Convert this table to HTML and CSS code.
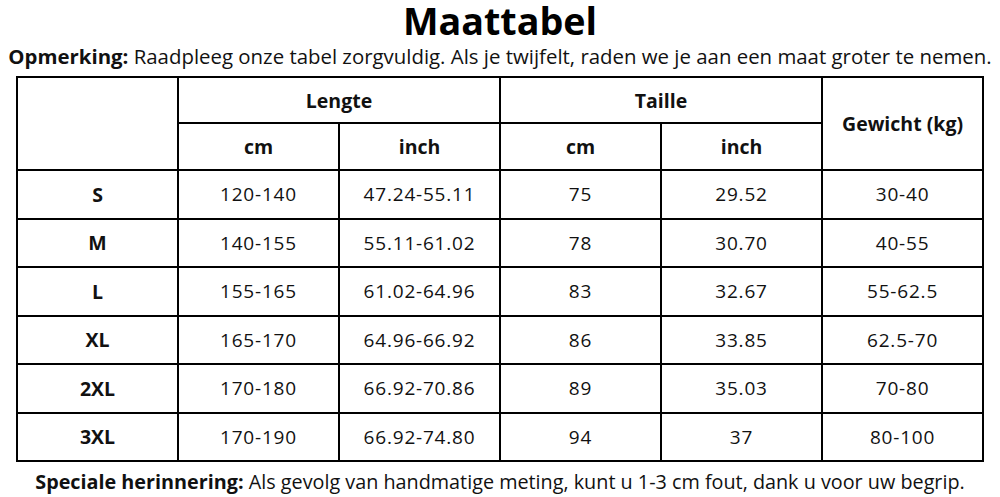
FILE: index.html
```html
<!DOCTYPE html>
<html lang="nl">
<head>
<meta charset="utf-8">
<title>Maattabel</title>
<link rel="stylesheet" href="styles.css">
</head>
<body>
<div class="page">
  <h1 class="title">Maattabel</h1>
  <p class="note"><b>Opmerking:</b> Raadpleeg onze tabel zorgvuldig. Als je twijfelt, raden we je aan een maat groter te nemen.</p>
  <table class="sizes">
    <colgroup>
      <col class="c"><col class="c"><col class="c"><col class="c"><col class="c"><col class="c">
    </colgroup>
    <thead>
      <tr class="h1">
        <th rowspan="2" class="blank"></th>
        <th colspan="2">Lengte</th>
        <th colspan="2">Taille</th>
        <th rowspan="2" class="gew">Gewicht (kg)</th>
      </tr>
      <tr class="h2">
        <th>cm</th><th>inch</th><th>cm</th><th>inch</th>
      </tr>
    </thead>
    <tbody>
      <tr><th>S</th><td>120-140</td><td>47.24-55.11</td><td>75</td><td>29.52</td><td>30-40</td></tr>
      <tr><th>M</th><td>140-155</td><td>55.11-61.02</td><td>78</td><td>30.70</td><td>40-55</td></tr>
      <tr><th>L</th><td>155-165</td><td>61.02-64.96</td><td>83</td><td>32.67</td><td>55-62.5</td></tr>
      <tr><th>XL</th><td>165-170</td><td>64.96-66.92</td><td>86</td><td>33.85</td><td>62.5-70</td></tr>
      <tr><th>2XL</th><td>170-180</td><td>66.92-70.86</td><td>89</td><td>35.03</td><td>70-80</td></tr>
      <tr><th>3XL</th><td>170-190</td><td>66.92-74.80</td><td>94</td><td>37</td><td>80-100</td></tr>
    </tbody>
  </table>
  <p class="foot"><b>Speciale herinnering:</b> Als gevolg van handmatige meting, kunt u 1-3 cm fout, dank u voor uw begrip.</p>
</div>
</body>
</html>
```
FILE: styles.css
```css
html, body {
  margin: 0;
  padding: 0;
  background: #fff;
}
body {
  font-family: "Open Sans", "Liberation Sans", sans-serif;
  color: #111;
}
.page {
  width: 1000px;
  height: 497px;
  overflow: hidden;
}
.title {
  margin: 0;
  height: 42px;
  line-height: 42px;
  font-size: 37.7px;
  font-weight: 700;
  text-align: center;
  color: #000;
}
.note {
  margin: 0;
  height: 29px;
  line-height: 29px;
  font-size: 20.4px;
  text-align: center;
  white-space: nowrap;
}
.note b, .foot b {
  font-weight: 700;
}
.sizes {
  margin: 5px 0 0 16px;
  width: 967px;
  table-layout: fixed;
  border-collapse: collapse;
  border: 2px solid #000;
}
.sizes .c {
  width: 161px;
}
.sizes th, .sizes td {
  border: 2px solid #000;
  padding: 0;
  text-align: center;
  vertical-align: middle;
  color: #111;
}
.sizes th {
  font-weight: 700;
  font-size: 19.5px;
}
.sizes td {
  font-weight: 400;
  font-size: 19px;
  letter-spacing: 0.8px;
}
.sizes .h1 {
  height: 46px;
}
.sizes .h2 {
  height: 47px;
}
.sizes tbody tr {
  height: 48.5px;
}
.foot {
  margin: 0;
  height: 36px;
  line-height: 40px;
  font-size: 19.8px;
  text-align: center;
  white-space: nowrap;
}
```
